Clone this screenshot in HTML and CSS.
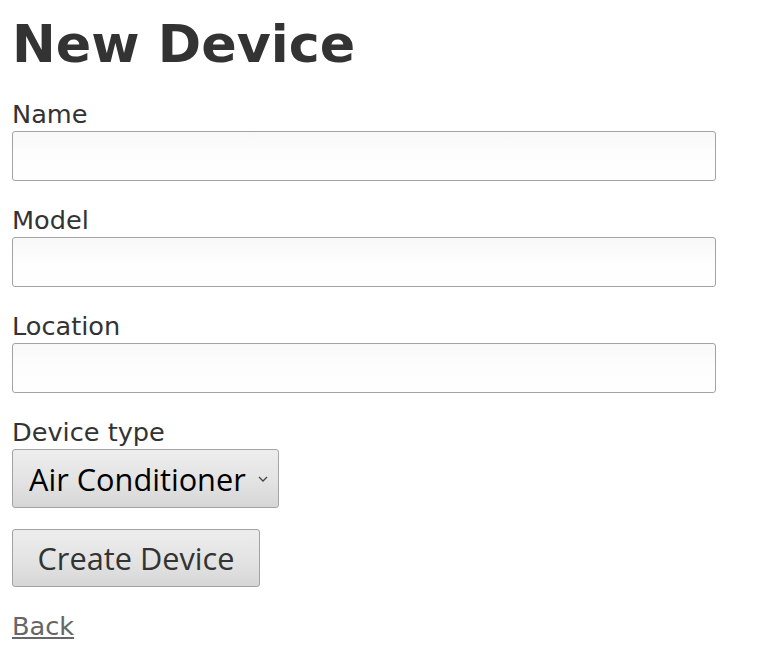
FILE: index.html
```html
<!DOCTYPE html>
<html>
<head>
<meta charset="utf-8">
<title>New Device</title>
<link rel="stylesheet" href="styles.css">
</head>
<body>
<h1 class="title">New Device</h1>
<form class="form">
  <div class="field">
    <label class="label" for="name">Name</label>
    <input class="input" id="name" type="text">
  </div>
  <div class="field">
    <label class="label" for="model">Model</label>
    <input class="input" id="model" type="text">
  </div>
  <div class="field">
    <label class="label" for="location">Location</label>
    <input class="input" id="location" type="text">
  </div>
  <div class="field field-select">
    <label class="label" for="type">Device type</label>
    <span class="select-wrap">
      <select class="select" id="type">
        <option>Air Conditioner</option>
      </select>
      <svg class="chevron" width="10" height="6" viewBox="0 0 10 6"><path d="M1 1 L5 5 L9 1" fill="none" stroke="#444" stroke-width="1.3"/></svg>
    </span>
  </div>
  <button class="button" type="button">Create Device</button>
</form>
<p class="back"><a class="back-link" href="#">Back</a></p>
</body>
</html>
```
FILE: styles.css
```css
html, body {
  margin: 0;
  background: #fff;
}
body {
  padding: 0 12px;
  font-family: "DejaVu Sans", sans-serif;
  font-size: 25.6px;
  color: #333;
}
.title {
  margin: 14px 0 0;
  font-size: 52.3px;
  line-height: 60px;
  font-weight: bold;
  color: #333;
}
.form {
  margin-top: 25px;
}
.field {
  margin-bottom: 24px;
}
.field-select {
  margin-bottom: 21px;
}
.label {
  display: block;
  line-height: 30px;
  height: 30px;
}
.input {
  display: block;
  box-sizing: border-box;
  margin: 2px 0 0;
  width: 704px;
  height: 50px;
  border: 1px solid #a3a3a3;
  border-radius: 3px;
  background: linear-gradient(to bottom, #f8f8f8 0%, #fdfdfd 45%, #fefefe 100%);
  font-family: "DejaVu Sans", sans-serif;
  font-size: 25.6px;
  padding: 0 10px;
}
.select-wrap {
  position: relative;
  display: inline-block;
  margin-top: 2px;
  vertical-align: top;
}
.select {
  -webkit-appearance: none;
  appearance: none;
  display: block;
  box-sizing: border-box;
  width: 267px;
  height: 59px;
  margin: 0;
  padding: 0 30px 0 16px;
  border: 1px solid #a3a3a3;
  border-radius: 3px;
  background: linear-gradient(to bottom, #ededed 0%, #e2e2e2 60%, #d6d6d6 100%);
  font-family: "Open Sans", sans-serif;
  font-size: 30.72px;
  color: #000;
}
.chevron {
  position: absolute;
  left: 246px;
  top: 27px;
}
.button {
  display: block;
  box-sizing: border-box;
  width: 248px;
  height: 58px;
  margin: 0;
  padding: 0;
  border: 1px solid #a3a3a3;
  border-radius: 3px;
  background: linear-gradient(to bottom, #ededed 0%, #e2e2e2 60%, #d6d6d6 100%);
  font-family: "Open Sans", sans-serif;
  font-size: 30.72px;
  color: #333;
}
.back {
  margin: 24px 0 0;
  line-height: 30px;
}
.back-link {
  color: #666;
  text-decoration: underline;
}
```
